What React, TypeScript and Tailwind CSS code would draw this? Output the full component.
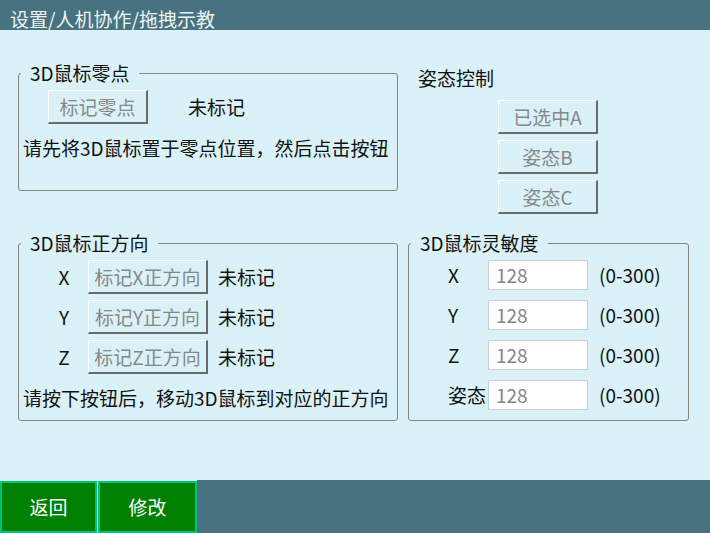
import React from "react";

const FONT = "font-['Noto_Sans_CJK_SC','Noto_Sans',sans-serif]";

// raised grey button, disabled look
function RaisedButton({ label, width }: { label: string; width: string }) {
  return (
    <button
      className={`${width} h-[34px] border-t border-l border-t-white border-l-white border-r-2 border-b-2 border-r-[#6a6a6a] border-b-[#6a6a6a] bg-[#daf1f7] text-[19px] leading-[22px] text-[#888888]`}
    >
      {label}
    </button>
  );
}

function Group({ title, className, children }: { title: string; className: string; children: React.ReactNode }) {
  return (
    <fieldset className={`rounded-[3px] border border-[#858585] ${className}`}>
      <legend className="ml-[2px] px-[9px] text-[19px] leading-[22px] text-[#111]">{title}</legend>
      {children}
    </fieldset>
  );
}

const axes = ["X", "Y", "Z"];

export default function App() {
  return (
    <div className={`flex h-[533px] w-[710px] flex-col bg-[#daf1f7] ${FONT}`}>
      {/* Header */}
      <div className="h-[30px] shrink-0 bg-[#477380] pl-[10px] pt-[7px] text-[19px] leading-[24px] text-[#eef4f5]">
        设置/人机协作/拖拽示教
      </div>

      {/* Main */}
      <div className="flex-1">
        <div className="flex items-start pl-[18px] pt-[32px]">
          <Group title="3D鼠标零点" className="h-[129px] w-[380px]">
            <div className="ml-[29px] mt-[6px] flex items-center">
              <RaisedButton label="标记零点" width="w-[100px]" />
              <span className="ml-[40px] text-[19px] leading-[22px] text-[#111]">未标记</span>
            </div>
            <div className="ml-[4px] mt-[13px] text-[19px] leading-[22px] text-[#111]">
              请先将3D鼠标置于零点位置，然后点击按钮
            </div>
          </Group>

          <div className="ml-[20px] pt-[5px]">
            <div className="text-[19px] leading-[22px] text-[#111]">姿态控制</div>
            <div className="ml-[80px] mt-[11px] flex flex-col gap-[6px]">
              <RaisedButton label="已选中A" width="w-[100px]" />
              <RaisedButton label="姿态B" width="w-[100px]" />
              <RaisedButton label="姿态C" width="w-[100px]" />
            </div>
          </div>
        </div>

        <div className="mt-[18px] flex pl-[18px]">
          <Group title="3D鼠标正方向" className="h-[189px] w-[380px]">
            <div className="mt-[6px] flex flex-col gap-[6px]">
              {axes.map((a) => (
                <div key={a} className="flex items-center">
                  <span className="ml-[21px] w-[48px] text-center text-[19px] leading-[22px] text-[#111]">{a}</span>
                  <RaisedButton label={`标记${a}正方向`} width="w-[120px]" />
                  <span className="ml-[10px] text-[19px] leading-[22px] text-[#111]">未标记</span>
                </div>
              ))}
            </div>
            <div className="ml-[4px] mt-[13px] text-[19px] leading-[22px] text-[#111]">
              请按下按钮后，移动3D鼠标到对应的正方向
            </div>
          </Group>

          <Group title="3D鼠标灵敏度" className="ml-[10px] h-[189px] w-[281px]">
            <div className="mt-[6px] flex flex-col gap-[10px]">
              {["X", "Y", "Z", "姿态"].map((a) => (
                <div key={a} className="flex items-center">
                  <span className="ml-[39px] w-[40px] text-[19px] leading-[22px] text-[#111]">{a}</span>
                  <div className="flex h-[30px] w-[100px] items-center border border-[#c9d3d6] bg-white pl-[7px] text-[19px] leading-[22px] text-[#858585]">
                    128
                  </div>
                  <span className="ml-[11px] text-[19px] leading-[22px] text-[#111]">(0-300)</span>
                </div>
              ))}
            </div>
          </Group>
        </div>
      </div>

      {/* Footer */}
      <div className="flex h-[53px] shrink-0 bg-[#477380]">
        <div className="flex gap-px bg-[#d6eeea] pt-px">
          <button className="h-full w-[97px] border-2 border-[#00c47e] bg-[#008000] text-[19px] leading-[22px] text-white">
            返回
          </button>
          <button className="h-full w-[99px] border-2 border-[#00c47e] bg-[#008000] text-[19px] leading-[22px] text-white">
            修改
          </button>
        </div>
      </div>
    </div>
  );
}
